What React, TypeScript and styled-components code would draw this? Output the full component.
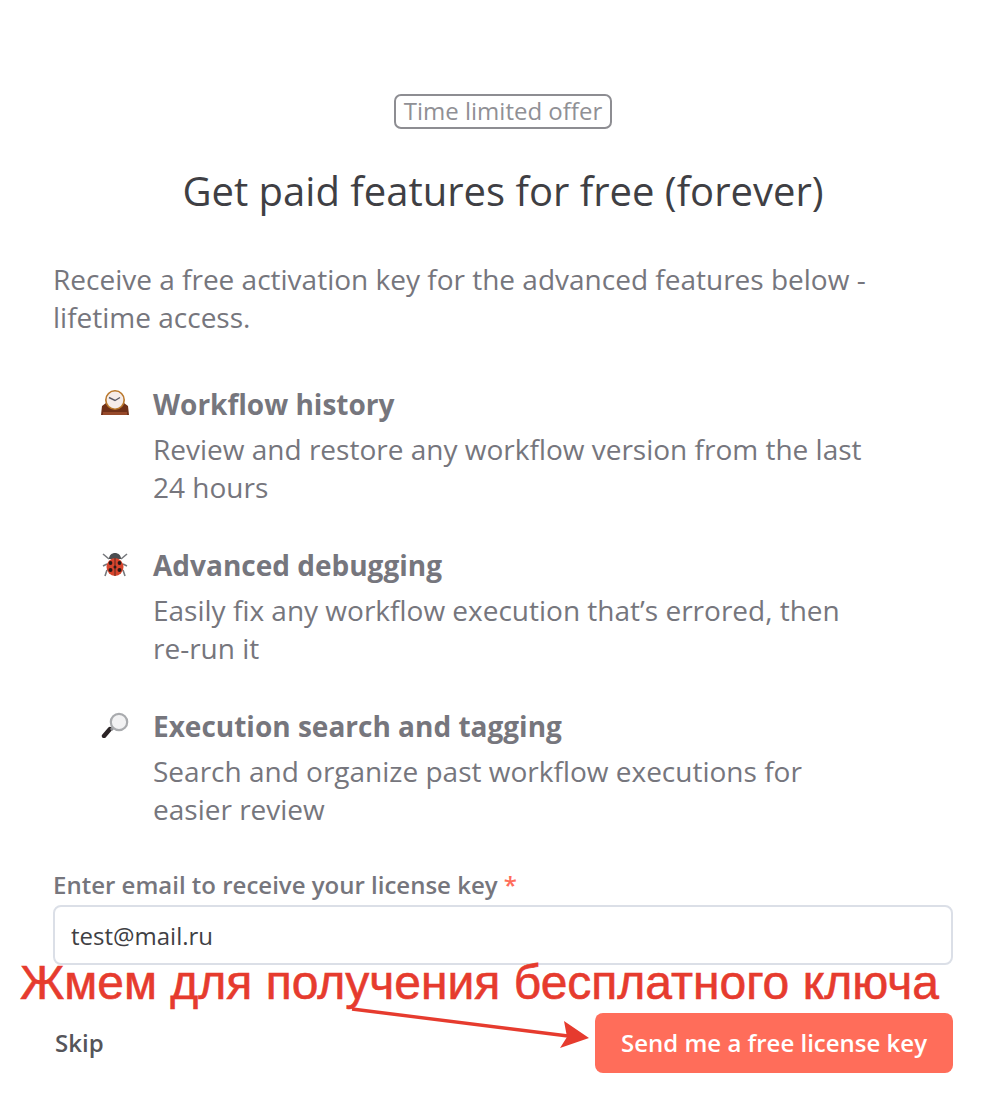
import React from "react";
import styled, { createGlobalStyle } from "styled-components";

const Global = createGlobalStyle`
  html, body { margin: 0; padding: 0; background: #fff; }
  body { font-family: "Open Sans", "Liberation Sans", sans-serif; }
`;

const Page = styled.div`
  width: 995px;
  height: 1114px;
  box-sizing: border-box;
  padding: 94px 42px 0 53px;
  display: flex;
  flex-direction: column;
  position: relative;
  overflow: hidden;
`;
const BadgeRow = styled.div`
  display: flex;
  justify-content: center;
`;
const Badge = styled.span`
  box-sizing: border-box;
  height: 35px;
  padding: 0 8px;
  border: 2px solid #8d8d92;
  border-radius: 7px;
  font-size: 24px;
  line-height: 29px;
  color: #909095;
`;
const Title = styled.h1`
  margin: 34px 0 0;
  font-size: 40px;
  line-height: 56px;
  font-weight: 400;
  text-align: center;
  color: #3f3f44;
`;
const Intro = styled.p`
  margin: 41px 0 0;
  font-size: 28px;
  line-height: 38px;
  color: #76767d;
`;
const Features = styled.div`
  margin-top: 49px;
  padding-left: 46px;
  display: flex;
  flex-direction: column;
  gap: 40px;
`;
const Feature = styled.div`
  display: flex;
  gap: 23px;
`;
const Emoji = styled.svg`
  width: 31px;
  height: 31px;
  flex: none;
`;
const FeatureTitle = styled.div`
  font-size: 28px;
  line-height: 38px;
  font-weight: 700;
  color: #76767d;
`;
const FeatureText = styled.div`
  margin-top: 7px;
  font-size: 28px;
  line-height: 38px;
  color: #76767d;
`;
const Label = styled.label`
  margin-top: 41px;
  font-size: 24px;
  line-height: 32px;
  font-weight: 600;
  color: #76767d;
`;
const Star = styled.span`
  color: #ff6d5a;
`;
const Input = styled.input`
  box-sizing: border-box;
  width: 100%;
  height: 60px;
  margin-top: 4px;
  padding: 0 16px;
  border: 2px solid #dbdfe7;
  border-radius: 8px;
  font: 400 24px "Open Sans", sans-serif;
  color: #3f3f44;
  outline: none;
`;
const Actions = styled.div`
  margin-top: 48px;
  display: flex;
  justify-content: space-between;
  align-items: center;
`;
const Skip = styled.span`
  padding-left: 2px;
  font-size: 24px;
  font-weight: 600;
  line-height: 56px;
  color: #55555a;
`;
const Send = styled.button`
  width: 358px;
  height: 60px;
  padding: 0 0 2px;
  border: 0;
  border-radius: 8px;
  background: #ff6d5a;
  color: #fff;
  font: 600 24px "Open Sans", sans-serif;
`;
const Note = styled.div`
  position: absolute;
  left: 20px;
  top: 955px;
  font-family: "Liberation Sans", sans-serif;
  font-size: 48px;
  line-height: 56px;
  color: #e63b2e;
  -webkit-text-stroke: 0.6px #e63b2e;
  white-space: nowrap;
`;
const Arrow = styled.svg`
  position: absolute;
  left: 340px;
  top: 1000px;
`;

const features = [
  { title: "Workflow history", lines: ["Review and restore any workflow version from the last", "24 hours"], icon: "clock" },
  { title: "Advanced debugging", lines: ["Easily fix any workflow execution that’s errored, then", "re-run it"], icon: "bug" },
  { title: "Execution search and tagging", lines: ["Search and organize past workflow executions for", "easier review"], icon: "lens" },
];

function Icon({ name }: { name: string }) {
  if (name === "clock") {
    return (
      <Emoji viewBox="0 0 31 31">
        <path d="M2 30l1-9 4-3 2-8h14l2 8 4 3 1 9z" fill="#6f3018" />
        <path d="M4 27h24v3H4z" fill="#96492a" />
        <circle cx="16" cy="15" r="10" fill="#b9772a" />
        <circle cx="16" cy="15" r="8.4" fill="#f5ece9" />
        <path d="M10 12.5l6 3 5-3" stroke="#5a5a66" strokeWidth="1.4" fill="none" />
      </Emoji>
    );
  }
  if (name === "bug") {
    return (
      <Emoji viewBox="0 0 31 31">
        <path d="M10 13L4 8M28 8l-6 5M8 18l-4 2M24 18l4 2M8 24l-2 6M24 24l2 6" stroke="#77797d" strokeWidth="1.6" />
        <path d="M10 13c0-4 3-6 6-6s6 2 6 6z" fill="#4b4d50" />
        <ellipse cx="16" cy="21" rx="8.5" ry="9" fill="#d8452d" />
        <path d="M16 12v18" stroke="#3a2320" strokeWidth="0.8" />
        <circle cx="11.5" cy="17" r="1.9" fill="#2a1a18" />
        <circle cx="20.5" cy="17" r="1.9" fill="#2a1a18" />
        <circle cx="11.5" cy="24" r="2" fill="#2a1a18" />
        <circle cx="20.5" cy="24" r="2" fill="#2a1a18" />
        <circle cx="16" cy="21" r="1.5" fill="#2a1a18" />
      </Emoji>
    );
  }
  return (
    <Emoji viewBox="0 0 31 31">
      <path d="M11 22L5 29" stroke="#2b2426" strokeWidth="4.4" strokeLinecap="round" />
      <path d="M15 20l-3 3" stroke="#8f9094" strokeWidth="3" />
      <circle cx="20" cy="15" r="8.2" fill="#f2f2f3" stroke="#a9abae" strokeWidth="2.2" />
    </Emoji>
  );
}

export default function App() {
  return (
    <>
      <Global />
      <Page>
        <BadgeRow>
          <Badge>Time limited offer</Badge>
        </BadgeRow>
        <Title>Get paid features for free (forever)</Title>
        <Intro>
          Receive a free activation key for the advanced features below -<br />
          lifetime access.
        </Intro>
        <Features>
          {features.map((f) => (
            <Feature key={f.title}>
              <Icon name={f.icon} />
              <div>
                <FeatureTitle>{f.title}</FeatureTitle>
                <FeatureText>
                  {f.lines[0]}
                  <br />
                  {f.lines[1]}
                </FeatureText>
              </div>
            </Feature>
          ))}
        </Features>
        <Label>
          Enter email to receive your license key <Star>*</Star>
        </Label>
        <Input defaultValue="test@mail.ru" />
        <Actions>
          <Skip>Skip</Skip>
          <Send>Send me a free license key</Send>
        </Actions>
        <Note>Жмем для получения бесплатного ключа</Note>
        <Arrow width="260" height="60" viewBox="0 0 260 60">
          <path d="M12 9L228 36" stroke="#e63b2e" strokeWidth="3.4" />
          <path d="M224 21L249 38L220 48L227 37z" fill="#e63b2e" />
        </Arrow>
      </Page>
    </>
  );
}
